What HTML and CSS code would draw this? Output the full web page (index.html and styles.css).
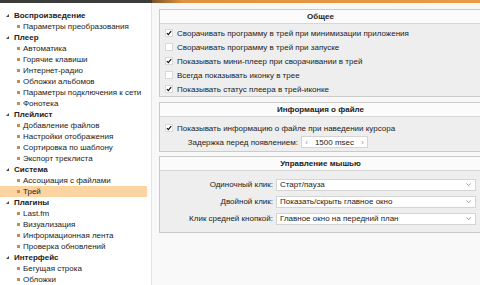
FILE: index.html
```html
<!DOCTYPE html>
<html lang="ru">
<head>
    <meta charset="UTF-8">
    <title>Настройки</title>
    <link rel="stylesheet" href="styles.css">
</head>
<body>
    <div class="topbar"><div class="topbar-dark"></div><div class="topbar-orange"></div></div>
    <div class="main">
        <ul class="tree">
            <li class="tree-head"><span class="arrow"></span>Воспроизведение</li>
            <li class="tree-item"><span class="dot"></span>Параметры преобразования</li>
            <li class="tree-head"><span class="arrow"></span>Плеер</li>
            <li class="tree-item"><span class="dot"></span>Автоматика</li>
            <li class="tree-item"><span class="dot"></span>Горячие клавиши</li>
            <li class="tree-item"><span class="dot"></span>Интернет-радио</li>
            <li class="tree-item"><span class="dot"></span>Обложки альбомов</li>
            <li class="tree-item"><span class="dot"></span>Параметры подключения к сети</li>
            <li class="tree-item"><span class="dot"></span>Фонотека</li>
            <li class="tree-head"><span class="arrow"></span>Плейлист</li>
            <li class="tree-item"><span class="dot"></span>Добавление файлов</li>
            <li class="tree-item"><span class="dot"></span>Настройки отображения</li>
            <li class="tree-item"><span class="dot"></span>Сортировка по шаблону</li>
            <li class="tree-item"><span class="dot"></span>Экспорт треклиста</li>
            <li class="tree-head"><span class="arrow"></span>Система</li>
            <li class="tree-item"><span class="dot"></span>Ассоциация с файлами</li>
            <li class="tree-item active"><span class="dot"></span>Трей</li>
            <li class="tree-head"><span class="arrow"></span>Плагины</li>
            <li class="tree-item"><span class="dot"></span>Last.fm</li>
            <li class="tree-item"><span class="dot"></span>Визуализация</li>
            <li class="tree-item"><span class="dot"></span>Информационная лента</li>
            <li class="tree-item"><span class="dot"></span>Проверка обновлений</li>
            <li class="tree-head"><span class="arrow"></span>Интерфейс</li>
            <li class="tree-item"><span class="dot"></span>Бегущая строка</li>
            <li class="tree-item"><span class="dot"></span>Обложки</li>
        </ul>
        <div class="content">
            <div class="group group-common">
                <div class="group-title">Общее</div>
                <div class="group-body">
                    <label class="check-row"><span class="check on"><svg viewBox="0 0 8 8"><path d="M1.2 4.2 L3.1 6.2 L6.9 1.4" /></svg></span>Сворачивать программу в трей при минимизации приложения</label>
                    <label class="check-row"><span class="check"></span>Сворачивать программу в трей при запуске</label>
                    <label class="check-row"><span class="check on"><svg viewBox="0 0 8 8"><path d="M1.2 4.2 L3.1 6.2 L6.9 1.4" /></svg></span>Показывать мини-плеер при сворачивании в трей</label>
                    <label class="check-row"><span class="check"></span>Всегда показывать иконку в трее</label>
                    <label class="check-row"><span class="check on"><svg viewBox="0 0 8 8"><path d="M1.2 4.2 L3.1 6.2 L6.9 1.4" /></svg></span>Показывать статус плеера в трей-иконке</label>
                </div>
            </div>
            <div class="group group-info">
                <div class="group-title">Информация о файле</div>
                <div class="group-body">
                    <label class="check-row"><span class="check on"><svg viewBox="0 0 8 8"><path d="M1.2 4.2 L3.1 6.2 L6.9 1.4" /></svg></span>Показывать информацию о файле при наведении курсора</label>
                    <div class="field-row short">
                        <span class="field-label wide">Задержка перед появлением:</span>
                        <div class="spin">
                            <span class="spin-btn">‹</span>
                            <span class="spin-value">1500 msec</span>
                            <span class="spin-btn">›</span>
                        </div>
                    </div>
                </div>
            </div>
            <div class="group group-mouse">
                <div class="group-title">Управление мышью</div>
                <div class="group-body">
                    <div class="field-row">
                        <span class="field-label">Одиночный клик:</span>
                        <div class="select">Старт/пауза<svg viewBox="0 0 8 8"><path d="M1.5 2.8 L4 5.3 L6.5 2.8" /></svg></div>
                    </div>
                    <div class="field-row">
                        <span class="field-label">Двойной клик:</span>
                        <div class="select">Показать/скрыть главное окно<svg viewBox="0 0 8 8"><path d="M1.5 2.8 L4 5.3 L6.5 2.8" /></svg></div>
                    </div>
                    <div class="field-row">
                        <span class="field-label">Клик средней кнопкой:</span>
                        <div class="select">Главное окно на передний план<svg viewBox="0 0 8 8"><path d="M1.5 2.8 L4 5.3 L6.5 2.8" /></svg></div>
                    </div>
                </div>
            </div>
        </div>
    </div>
</body>
</html>
```

FILE: styles.css
```css
* {
    margin: 0;
    padding: 0;
    list-style: none;
    box-sizing: border-box;
    font-family: "Liberation Sans", "DejaVu Sans", Arial, sans-serif;
}
html, body {
    width: 100%;
    height: 100%;
    overflow: hidden;
    background: #fff;
    color: #222;
    font-size: 8px;
}
.topbar {
    display: flex;
    height: 3px;
}
.topbar-dark {
    width: 152px;
    background: #3c3c3c;
}
.topbar-orange {
    flex: 1;
    background: linear-gradient(to right, #7a5028, #e0923e 30px, #e99a46);
}
.main {
    display: flex;
    height: 282px;
}
.tree {
    width: 152px;
    padding-top: 7px;
    border-right: 1px solid #e4e4e4;
    background: #fff;
}
.tree-head,
.tree-item {
    display: flex;
    align-items: center;
    height: 11px;
    line-height: 11px;
    white-space: nowrap;
}
.tree-head {
    font-weight: bold;
    padding-left: 6px;
}
.tree-item {
    padding-left: 17px;
}
.tree-item.active {
    background: #fcd4a2;
    margin-right: 4px;
}
.arrow {
    width: 0;
    height: 0;
    margin-right: 5px;
    border-left: 3px solid transparent;
    border-bottom: 3px solid #444;
}
.dot {
    width: 3px;
    height: 3px;
    margin-right: 3px;
    background: #c98a4c;
}
.content {
    flex: 1;
    padding: 6px 0 0 7px;
    background: linear-gradient(#f7f7f7, #f9f9f9);
}
.group {
    margin-right: -2px;
    border: 1px solid #cacaca;
    background: #eeeeee;
}
.group-common {
    margin-bottom: 5px;
}
.group-info {
    margin-bottom: 4px;
}
.group-title {
    height: 14px;
    line-height: 13px;
    text-align: center;
    font-weight: bold;
    background: #fbfbfb;
    border-bottom: 1px solid #d6d6d6;
}
.group-common .group-body {
    padding: 2px 0 0;
}
.group-info .group-body {
    padding: 4px 0 2px;
}
.group-mouse .group-body {
    padding: 5px 0 5px;
}
.check-row {
    display: flex;
    align-items: center;
    height: 14px;
    padding-left: 5px;
    white-space: nowrap;
}
.check {
    width: 8px;
    height: 8px;
    margin-right: 4px;
    background: #fff;
    border: 1px solid #d8d8d8;
}
.check svg {
    display: block;
    width: 6px;
    height: 6px;
}
.check path,
.select path {
    fill: none;
    stroke: #111;
    stroke-width: 1.6;
}
.field-row {
    display: flex;
    align-items: center;
    height: 17px;
    padding-right: 5px;
}
.field-row.short {
    height: 14px;
}
.field-label {
    width: 113px;
    text-align: right;
    margin-right: 3px;
    white-space: nowrap;
}
.field-label.wide {
    width: 138px;
}
.spin {
    display: flex;
    align-items: center;
    width: 67px;
    height: 12px;
    background: #fff;
    border: 1px solid #d4d4d4;
}
.spin-btn {
    width: 9px;
    text-align: center;
    color: #999;
}
.spin-value {
    flex: 1;
    text-align: center;
}
.select {
    flex: 1;
    display: flex;
    align-items: center;
    justify-content: space-between;
    height: 12px;
    padding: 0 3px 0 3px;
    background: #fff;
    border: 1px solid #d4d4d4;
    white-space: nowrap;
}
.select svg {
    width: 7px;
    height: 7px;
}
.select path {
    stroke: #888;
    stroke-width: 1;
}
```
